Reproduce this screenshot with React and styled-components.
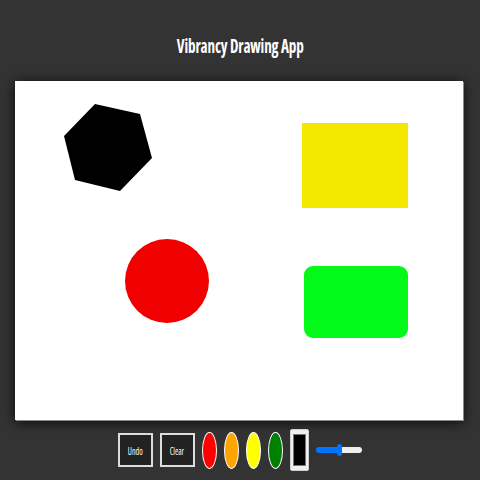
import React, { useState } from "react";
import styled, { createGlobalStyle } from "styled-components";

const Global = createGlobalStyle`
  html, body { margin: 0; padding: 0; background: #333333; }
  body { font-family: "Open Sans", "Liberation Sans", Arial, sans-serif; }
`;

const Page = styled.div`
  width: 480px;
  height: 480px;
  display: flex;
  flex-direction: column;
  align-items: center;
  box-sizing: border-box;
  padding-top: 33px;
`;

const Title = styled.h1`
  margin: 0 0 0 1px;
  height: 48px;
  font-family: "Open Sans", "Liberation Sans", Arial, sans-serif;
  font-stretch: 75%;
  font-weight: bold;
  font-size: 19px;
  line-height: 26px;
  letter-spacing: -0.2px;
  color: #ffffff;
  transform: scaleX(0.8);
`;

const Board = styled.div`
  width: 448px;
  height: 339px;
  margin-right: 2px;
  background: #ffffff;
  box-shadow: 1px 1px 0 #8a8a8a, 0 2px 12px rgba(0, 0, 0, 0.85);
`;

const Toolbar = styled.div`
  display: flex;
  align-items: center;
  gap: 7px;
  margin-top: 9px;
  margin-right: 1px;
  height: 42px;
`;

const TextButton = styled.button`
  width: 35px;
  height: 34px;
  padding: 0;
  box-sizing: border-box;
  background: #222222;
  border: 2px solid #dddddd;
  color: #ffffff;
  cursor: pointer;
`;

const Label = styled.span`
  display: inline-block;
  font-family: "Open Sans", "Liberation Sans", Arial, sans-serif;
  font-stretch: 75%;
  font-size: 10px;
  transform: scaleX(0.8);
`;

const Swatch = styled.button`
  width: 15px;
  height: 37px;
  padding: 0;
  box-sizing: border-box;
  border-radius: 50%;
  border: 1px solid #ffffff;
  background: ${(p) => p.$color};
  cursor: pointer;
`;

const ColorPicker = styled.input`
  width: 19px;
  height: 42px;
  padding: 4px 2px;
  margin: 0;
  box-sizing: border-box;
  background: #efefef;
  border: 1px solid #cfcfcf;
  border-radius: 2px;
  &::-webkit-color-swatch-wrapper { padding: 0; }
  &::-webkit-color-swatch { border: 1px solid #777; border-radius: 0; }
`;

const Size = styled.input`
  -webkit-appearance: none;
  appearance: none;
  width: 46px;
  height: 6px;
  margin: 0;
  border-radius: 3px;
  background: linear-gradient(
    to right,
    #0075ff 0%,
    #0075ff ${(p) => p.$pct}%,
    #efefef ${(p) => p.$pct}%,
    #efefef 100%
  );
  &::-webkit-slider-thumb {
    -webkit-appearance: none;
    width: 5px;
    height: 12px;
    border-radius: 3px;
    background: #0075ff;
  }
`;

const Shapes = styled.svg`
  display: block;
`;

export default function App() {
  const [size, setSize] = useState(52);
  return (
    <Page>
      <Global />
      <Title>Vibrancy Drawing App</Title>
      <Board>
        <Shapes width="448" height="339" viewBox="0 0 448 339">
          <polygon
            points="80,23 125,33 137,77 105,110 60,99 49,55"
            fill="#000000"
          />
          <rect x="287" y="42" width="106" height="85" fill="#f4e800" />
          <rect x="289" y="185" width="104" height="72" rx="9" fill="#03f91a" />
          <circle cx="152" cy="200" r="42" fill="#f00000" />
        </Shapes>
      </Board>
      <Toolbar>
        <TextButton><Label>Undo</Label></TextButton>
        <TextButton><Label>Clear</Label></TextButton>
        <Swatch $color="#ff0000" />
        <Swatch $color="#ffa500" />
        <Swatch $color="#ffff00" />
        <Swatch $color="#008000" />
        <ColorPicker type="color" defaultValue="#000000" />
        <Size
          type="range"
          min="1"
          max="100"
          value={size}
          $pct={size}
          onChange={(e) => setSize(Number(e.target.value))}
        />
      </Toolbar>
    </Page>
  );
}
